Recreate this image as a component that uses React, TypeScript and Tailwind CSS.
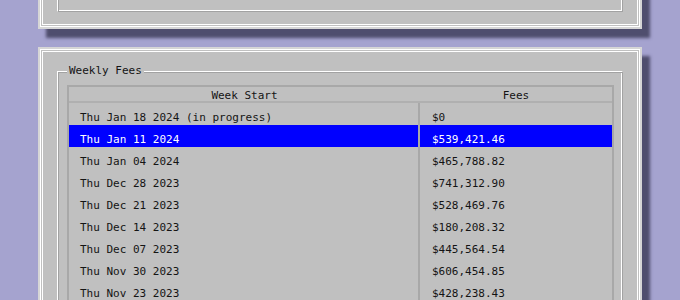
import React from 'react';

type FeeRow = {
  week: string;
  fees: string;
};

// 주간 수수료 데이터
const rows: FeeRow[] = [
  { week: 'Thu Jan 18 2024 (in progress)', fees: '$0' },
  { week: 'Thu Jan 11 2024', fees: '$539,421.46' },
  { week: 'Thu Jan 04 2024', fees: '$465,788.82' },
  { week: 'Thu Dec 28 2023', fees: '$741,312.90' },
  { week: 'Thu Dec 21 2023', fees: '$528,469.76' },
  { week: 'Thu Dec 14 2023', fees: '$180,208.32' },
  { week: 'Thu Dec 07 2023', fees: '$445,564.54' },
  { week: 'Thu Nov 30 2023', fees: '$606,454.85' },
  { week: 'Thu Nov 23 2023', fees: '$428,238.43' },
  { week: 'Thu Nov 16 2023', fees: '$512,903.17' },
  { week: 'Thu Nov 09 2023', fees: '$397,640.08' },
];

const SELECTED = 1;

// 레트로 창 패널 (이중 흰 선 + 그림자)
const Panel: React.FC<{ className?: string; children: React.ReactNode }> = ({
  className = '',
  children,
}) => (
  <div
    className={`border-2 border-[#d6d6d6] bg-[#c0c0c0] shadow-[8px_9px_3px_#4f4e6e] ${className}`}
  >
    <div className="border border-white p-px">
      <div className="border border-white">{children}</div>
    </div>
  </div>
);

// 그룹 박스 테두리 (ridge 느낌)
const groupBorder =
  'border border-t-white border-l-white border-b-[#a2a2a2] border-r-[#a2a2a2] shadow-[inset_1px_1px_0_#a2a2a2,inset_-1px_-1px_0_#ffffff]';

const App: React.FC = () => {
  return (
    <div className="min-h-screen bg-[#a5a3cf] px-[38px] font-['DejaVu_Sans_Mono',monospace] text-[11px] text-[#141414]">
      {/* 위쪽 패널: 스크롤되어 아랫부분만 보임 */}
      <Panel className="-mt-[182px]">
        <div className="px-[14px] pt-[19px] pb-[12px]">
          <div className={`h-[170px] ${groupBorder}`} />
        </div>
      </Panel>

      {/* Weekly Fees 패널 */}
      <Panel className="mt-[18px]">
        <div className="px-[14px] pt-[19px] pb-[12px]">
          <div className={`relative pl-[9px] pr-[8px] pt-[13px] pb-[10px] ${groupBorder}`}>
            <span className="absolute -top-[8px] left-[9px] bg-[#c0c0c0] px-[2px] leading-[14px]">
              Weekly Fees
            </span>

            <div className="border-2 border-[#a8a8a8]">
              {/* 헤더 */}
              <div className="grid grid-cols-[351px_1fr] border-b-2 border-[#b0b0b0]">
                <div className="h-[14px] pt-[2px] text-center leading-[13px]">Week Start</div>
                <div className="h-[14px] pt-[2px] text-center leading-[13px]">Fees</div>
              </div>

              {/* 행 목록 */}
              {rows.map((row, i) => {
                const isActive = i === SELECTED;
                return (
                  <div
                    key={row.week}
                    className={`grid h-[22px] grid-cols-[351px_1fr] ${
                      isActive ? 'bg-[#0000ff] text-white' : ''
                    }`}
                  >
                    <div className="border-r-2 border-[#a8a8a8] pl-[11px] pt-[8px] leading-[13px] whitespace-pre">
                      {row.week}
                    </div>
                    <div className="pl-[12px] pt-[8px] leading-[13px]">{row.fees}</div>
                  </div>
                );
              })}
            </div>
          </div>
        </div>
      </Panel>
    </div>
  );
};

export default App;
